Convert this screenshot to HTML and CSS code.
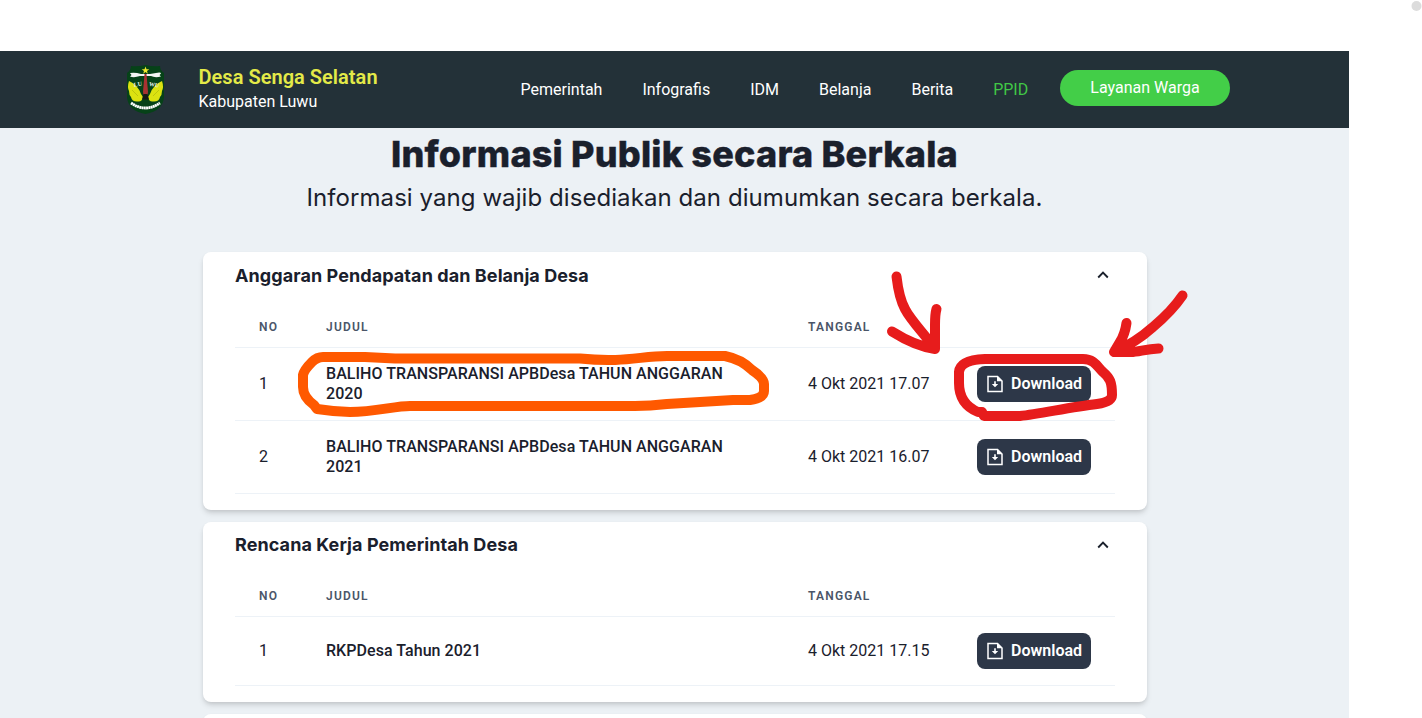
FILE: index.html
```html
<!DOCTYPE html>
<html lang="id">
<head>
<meta charset="utf-8">
<title>Desa Senga Selatan</title>
<link rel="stylesheet" href="styles.css">
</head>
<body>
<svg class="defs" width="0" height="0">
  <symbol id="file" viewBox="0 0 16 18"><path d="M1 1.5H10.5L15 6V16.5H1Z" fill="none" stroke="#fff" stroke-width="1.5"/><path d="M10 1V6.3H15.3Z" fill="#fff"/><path d="M7.2 6.2H8.8V9H11.2L8 12.3L4.8 9H7.2Z" fill="#fff"/></symbol>
  <symbol id="chevron" viewBox="0 0 12 8"><path d="M1.2 6.5L6 1.7L10.8 6.5" fill="none" stroke="#1a202c" stroke-width="1.9"/></symbol>
</svg>
<div class="page">
  <header class="navbar">
    <svg class="logo" viewBox="0 0 39 49">
      <path d="M5 1Q12 2 19.500 0Q27 2 34 1Q34 5 38 8L38 32Q37 46 19.500 49Q2 46 1 32L1 8Q5 5 5 1Z" fill="#064218"/>
      <path d="M19.500 1.500L20.500 4.300H23.300L21 6L21.800 8.700L19.500 7L17.200 8.700L18 6L15.700 4.300H18.500Z" fill="#f0e92b"/>
      <path d="M4 8Q9 7 15 9H24L30 8Q35 7 35 8.500L33.500 10L35 11.500Q29 13 25 11H14Q8 13 4 11.500L5.500 10Z" fill="#f3f5f3"/>
      <path d="M3 16Q12 20 15 29L17 32Q16 37 12 36.500Q6 37 5 32Q3 30 3 26Q1 22 3 16Z" fill="#dce211"/>
      <path d="M36 16Q27 20 24 29L22 32Q23 37 27 36.500Q33 37 34 32Q36 30 36 26Q38 22 36 16Z" fill="#dce211"/>
      <path d="M6 25L12 31M33 25L27 31" stroke="#a9b30c" stroke-width=".6"/>
      <path d="M18.500 9H20.500L22 27L21.500 30H17.500L17 27Z" fill="#a83232"/>
      <path d="M17.500 29H21.500L23 34.500H16Z" fill="#171b16"/>
      <text class="logo-text" x="7.500" y="21.500" transform="rotate(-10 11 19)">LU</text><text class="logo-text" x="23" y="21.500" transform="rotate(10 27 19)">WU</text>
      <path d="M5 38Q19.500 48 34 38" fill="none" stroke="#fff" stroke-width="2.800" stroke-dasharray="2 .3"/>
    </svg>
    <div class="brand"><div class="village">Desa Senga Selatan</div><div class="regency">Kabupaten Luwu</div></div>
    <nav class="links"><a>Pemerintah</a><a>Infografis</a><a>IDM</a><a>Belanja</a><a>Berita</a><a class="active">PPID</a></nav>
    <button class="service">Layanan Warga</button>
  </header>
  <main class="content">
    <h1>Informasi Publik secara Berkala</h1>
    <p class="lead">Informasi yang wajib disediakan dan diumumkan secara berkala.</p>
    <div class="cards">
      <section class="card">
        <div class="card-head"><h2>Anggaran Pendapatan dan Belanja Desa</h2><svg class="chevron"><use href="#chevron"/></svg></div>
        <div class="row head"><span>NO</span><span>JUDUL</span><span>TANGGAL</span><span></span></div>
        <div class="row"><span>1</span><b>BALIHO TRANSPARANSI APBDesa TAHUN ANGGARAN 2020</b><span>4 Okt 2021 17.07</span><button class="download"><svg><use href="#file"/></svg>Download</button></div>
        <div class="row"><span>2</span><b>BALIHO TRANSPARANSI APBDesa TAHUN ANGGARAN 2021</b><span>4 Okt 2021 16.07</span><button class="download"><svg><use href="#file"/></svg>Download</button></div>
      </section>
      <section class="card">
        <div class="card-head"><h2>Rencana Kerja Pemerintah Desa</h2><svg class="chevron"><use href="#chevron"/></svg></div>
        <div class="row head"><span>NO</span><span>JUDUL</span><span>TANGGAL</span><span></span></div>
        <div class="row"><span>1</span><b>RKPDesa Tahun 2021</b><span>4 Okt 2021 17.15</span><button class="download"><svg><use href="#file"/></svg>Download</button></div>
      </section>
      <section class="card next"></section>
    </div>
  </main>
</div>
<svg class="marks" viewBox="0 0 1422 718">
  <path class="orange" d="M317 409L314 405Q303 397 303 387V375Q304 370 312 362Q317 357 323 357H365L395 358.500H580C625 363 640 356 667 356H725C740 359 747 365 752 370Q764 378 764 384V391Q764 398 750 400H733L667 404Q650 406 635 406H410C395 406 375 412 350 412Q333 411.500 317 409Z"/>
  <path class="red" d="M896.500 276.500Q899 298 905 309C911 321 928 338 935 349M892 331.500Q915 346 935 349M936.500 309Q935 314 935 325V349"/>
  <path class="red" d="M1182.500 295.500Q1172 311 1153 327Q1135 343 1114 352M1126.500 323Q1125 334 1120 342L1114 352H1131C1139 352 1145 349 1158.500 348.500"/>
  <path class="red" d="M982 412H978Q959 404 959 383V372Q960 360 985 359H1083C1095 359 1098 368 1103 372C1110 378 1112 382 1112 395Q1112 402 1097 404C1070 407 1040 414 1020 416H984L982 412"/>
  <circle class="dot" cx="1416.500" cy="6" r="5"/>
</svg>
</body>
</html>
```
FILE: styles.css
```css
* { box-sizing: border-box; }
body { margin: 0; height: 718px; overflow: hidden; background: #fff; color: #1a202c; font-family: Roboto, sans-serif; font-size: 16px; }
h1, h2, p { margin: 0; }
button { border: 0; font: inherit; color: #fff; }
.defs { position: absolute; }
.page { width: 1349px; height: 718px; padding-top: 51px; overflow: hidden; }
.navbar { display: flex; height: 77px; background: #233138; color: #fff; padding-left: 126px; }
.logo { width: 39px; height: 49px; margin-top: 14px; flex: none; }
.logo-text { font: bold 6px "Liberation Serif", serif; fill: #e8eee8; }
.brand { width: 322px; padding: 13px 0 0 33.500px; white-space: nowrap; }
.village { font-size: 20px; line-height: 26px; font-weight: 600; color: #e4ea48; letter-spacing: .03px; }
.regency { line-height: 24px; }
.links { display: flex; gap: 40px; padding: 27px 0 0 33.500px; line-height: 24px; width: 573px; white-space: nowrap; }
.active { color: #41c746; }
.service { width: 170px; height: 36px; margin-top: 19px; padding: 0 0 2px; border-radius: 18px; background: #43ce48; }
.content { height: 590px; background: #ecf1f5; text-align: center; }
h1 { font: 800 36px/44px Inter, sans-serif; padding-top: 4px; height: 50px; letter-spacing: .2px; -webkit-text-stroke: .4px #1a202c; }
.lead { font: 24px/40px Inter, sans-serif; height: 74.200px; letter-spacing: .07px; }
.cards { display: flex; flex-direction: column; gap: 12px; width: 944px; margin: 0 auto 0 203px; text-align: left; }
.card { flex: none; padding: 0 32px 16px; background: #fff; border-radius: 8px; box-shadow: 0 4px 6px -1px rgba(0,0,0,.13), 0 2px 4px -1px rgba(0,0,0,.09); }
.next { height: 60px; }
.card-head { height: 54.500px; display: flex; justify-content: space-between; padding-right: 6px; }
h2 { font: 700 18px/46px Inter, sans-serif; letter-spacing: .08px; padding-top: .400px; }
.chevron { width: 12px; height: 8px; margin-top: 19px; }
.row { display: grid; grid-template-columns: 67px 482px 169px 162px; align-items: center; padding: 16px 0; border-bottom: 1px solid #edf2f7; line-height: 20px; }
.row > * { margin-left: 24px; }
.row > b { width: 434px; font-weight: 500; letter-spacing: .05px; }
.head { padding: 12px 0; font-size: 12px; line-height: 16px; color: #4a5568; }
.head > span { font-weight: 600; letter-spacing: 1.200px; }
.download { display: flex; align-items: center; gap: 8px; width: 114px; height: 36px; padding: 0 0 0 10px; border-radius: 8px; background: #2d3748; font-weight: 600; }
.download svg { width: 16px; height: 18px; }
.marks { position: absolute; top: 0; left: 0; width: 1422px; height: 718px; fill: none; stroke-width: 10px; stroke-linecap: round; stroke-linejoin: round; }
.orange { stroke: #ff5900; }
.red { stroke: #e71c1c; }
.dot { fill: #dcdcdc; }
```
